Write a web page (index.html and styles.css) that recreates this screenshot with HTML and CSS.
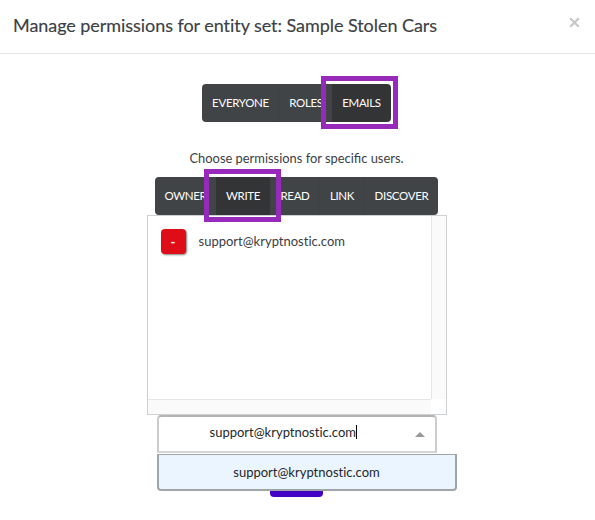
FILE: index.html
```html
<!DOCTYPE html>
<html lang="en">
<head>
<meta charset="utf-8">
<title>Manage permissions</title>
<link rel="stylesheet" href="styles.css">
</head>
<body>
<div class="modal">
  <header class="modal-header">
    <h1 class="modal-title"><span>Manage permissions for entity set: Sample Stolen Cars</span></h1>
    <button class="close" aria-label="Close"><svg width="11" height="11" viewBox="0 0 11 11"><path d="M1.2 1.2 9.8 9.8M9.8 1.2 1.2 9.8"/></svg></button>
  </header>
  <main class="modal-body">
    <nav class="tabs scope">
      <button class="tab everyone"><span>EVERYONE</span></button>
      <button class="tab roles"><span>ROLES</span></button>
      <button class="tab emails active"><span>EMAILS</span><i class="highlight"></i></button>
    </nav>
    <p class="hint"><span>Choose permissions for specific users.</span></p>
    <nav class="tabs levels">
      <button class="tab owner"><span>OWNER</span></button>
      <button class="tab write active"><span>WRITE</span><i class="highlight"></i></button>
      <button class="tab read"><span>READ</span></button>
      <button class="tab link"><span>LINK</span></button>
      <button class="tab discover"><span>DISCOVER</span></button>
    </nav>
    <section class="list">
      <div class="rows">
        <div class="row"><button class="remove">-</button><span class="email">support@kryptnostic.com</span></div>
      </div>
      <div class="track-y"></div>
      <div class="track-x"></div>
    </section>
    <div class="select">
      <div class="control"><span class="email">support@kryptnostic.com</span><i class="caret"></i><i class="arrow"></i></div>
      <div class="menu"><span class="email">support@kryptnostic.com</span></div>
    </div>
    <button class="submit" aria-label="Submit"></button>
  </main>
</div>
</body>
</html>
```
FILE: styles.css
```css
* { box-sizing: border-box; }
body { margin: 0; background: #fff; color: #3b4045; font: 13px/18px Lato, "Liberation Sans", sans-serif; overflow: hidden; }
button { border: 0; padding: 0; font: inherit; background: none; }
span { white-space: nowrap; }
.modal { width: 595px; height: 520px; overflow: hidden; }
.modal-header { display: flex; align-items: flex-start; justify-content: space-between; height: 54px; padding: 13px 15px 0 13px; border-bottom: 1px solid #e5e5e5; }
.modal-title { margin: 0; font-size: 18px; line-height: 24px; font-weight: 400; letter-spacing: -.055px; -webkit-text-stroke: .15px #3b4045; }
.close { display: flex; margin-top: 4px; }
.close svg { fill: none; stroke: #c8c8c8; stroke-width: 2.3; }
.modal-body { display: flex; flex-direction: column; align-items: center; width: 593px; padding-top: 30px; }
.tabs { display: flex; height: 38px; }
.tab { position: relative; display: flex; align-items: center; justify-content: center; background: #414447; color: #fff; font-size: 11.5px; letter-spacing: -.32px; line-height: 18px; }
.tab + .tab { border-left: 1px solid #3f4245; }
.tab:first-child { border-radius: 4px 0 0 4px; }
.tab:last-child { border-radius: 0 4px 4px 0; }
.tab.active { background: #333436; border-left: 0; z-index: 1; }
.highlight { position: absolute; top: -8px; left: -11px; width: 77px; height: 53px; border: 5px solid #9729bb; }
.write .highlight { left: -12px; }
.scope { width: 189px; }
.everyone { width: 77px; }
.roles { width: 53px; }
.emails { width: 59px; }
.hint { margin: 27px 0 0; height: 28px; font-size: 12.9px; }
.levels { width: 283px; }
.owner { width: 61px; }
.write { width: 54px; }
.read { width: 49px; }
.link { width: 45px; }
.discover { width: 74px; }
.list { display: grid; grid-template: 183px 15px / 283px 15px; width: 300px; height: 200px; border: 1px solid #cdd1d4; }
.rows { padding: 13px; }
.row { display: flex; align-items: center; gap: 13px; }
.email { font-variant-ligatures: none; }
.row .email { margin-top: -2px; }
.remove { width: 25px; height: 25px; border-radius: 4px; background: #df0d17; color: #fff; font-weight: 700; font-size: 13px; box-shadow: 1px 1px 2px rgba(0,0,0,.5); }
.track-y { background: #fafafa; border-left: 1px solid #e6e6e6; }
.track-x { background: #fafafa; border-top: 1px solid #e6e6e6; }
.select { position: relative; z-index: 1; width: 300px; margin-left: 20px; color: #24282b; }
.control { display: flex; align-items: center; width: 280px; height: 38px; padding: 0 10px 4px 51px; border: 2px solid; border-color: #b3b3b3 #ccc #d5d5d5; border-radius: 4px 4px 0 0; }
.caret { width: 1px; height: 14px; margin-left: .5px; background: #000; }
.arrow { margin: 4px 0 0 auto; border: solid transparent; border-width: 0 5px 5px; border-bottom-color: #999; }
.menu { display: flex; align-items: center; justify-content: center; height: 37px; margin-top: 1px; border: 2px solid #9fa6aa; border-top-width: 1px; border-radius: 0 0 4px 4px; background: #ebf5ff; }
.submit { width: 53px; height: 38px; margin: -32px 0 0 0; border-radius: 4px; background: #4203c5; }
```
